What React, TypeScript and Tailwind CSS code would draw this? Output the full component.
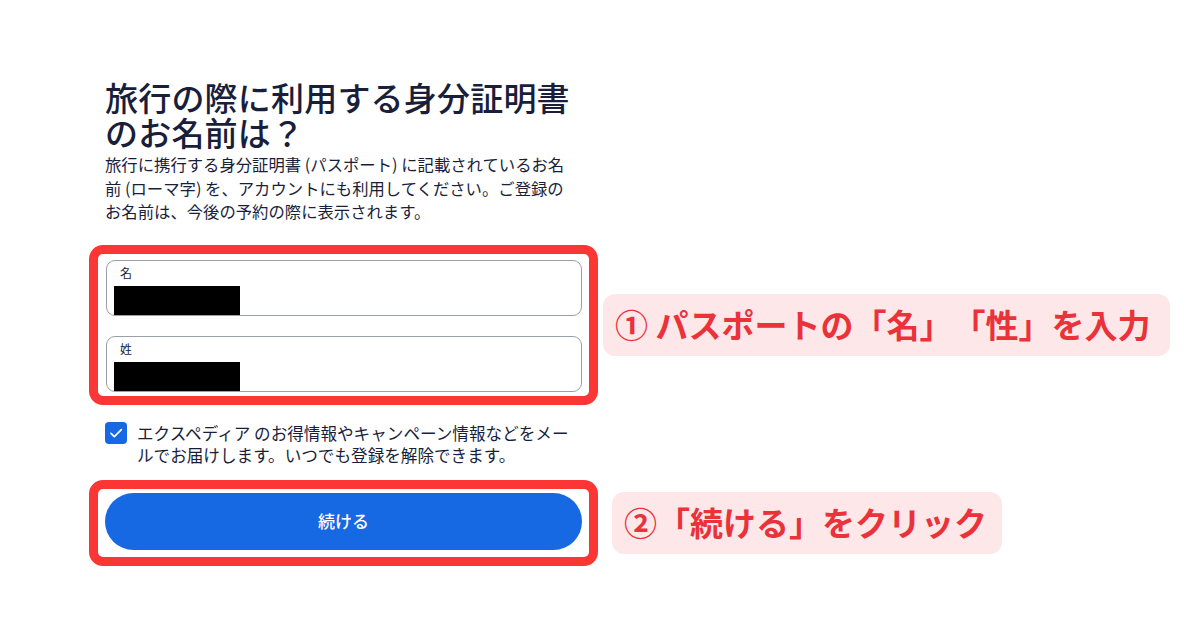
import React from 'react'

const font = "font-['Noto_Sans_CJK_JP','Noto_Sans',sans-serif]"

function NameField({ label }: { label: string }) {
  return (
    <div className="flex flex-col h-[56px] border border-[#9aa0a8] rounded-[9px] pl-[7px] pt-[5px]">
      <span className="ml-[6px] text-[12px] leading-[14px] text-[#191e3b]">{label}</span>
      {/* masked value */}
      <div className="mt-[6px] w-[126px] h-[29px] bg-black" />
    </div>
  )
}

function Note({ children, className }: { children: React.ReactNode; className?: string }) {
  return (
    <div className={`bg-[#fde7e8] rounded-[12px] pl-[12px] flex items-center font-bold text-[#e9323a] [text-spacing-trim:space-all] ${className ?? ''}`}>
      {children}
    </div>
  )
}

export default function App() {
  return (
    <div className={`w-[1200px] h-[630px] bg-white overflow-hidden pt-[80px] pl-[89px] ${font}`}>
      {/* Heading */}
      <div className="pl-[16px] text-[#191e3b]">
        <h1 className="text-[33px] leading-[35px] font-medium tracking-[0.2px]">
          旅行の際に利用する身分証明書
          <br />
          のお名前は？
        </h1>
        <p className="mt-[3px] text-[16.35px] leading-[23.5px]">
          旅行に携行する身分証明書 (パスポート) に記載されているお名
          <br />
          前 (ローマ字) を、アカウントにも利用してください。ご登録の
          <br />
          お名前は、今後の予約の際に表示されます。
        </p>
      </div>

      {/* Step 1: name fields */}
      <div className="mt-[21px] flex items-center">
        <div className="w-[509px] h-[160px] border-[9px] border-[#fc3535] rounded-[14px] pt-[6px] pl-[8px] pr-[7px] flex flex-col gap-[20px]">
          <NameField label="名" />
          <NameField label="姓" />
        </div>
        <Note className="ml-[5px] h-[62px] pr-[19px] text-[33px] leading-none">
          <span>①&nbsp;パスポートの「名」「性」を入力</span>
        </Note>
      </div>

      {/* Newsletter opt-in */}
      <div className="mt-[17px] pl-[16px] flex items-start gap-[10px]">
        <div className="w-[22px] h-[22px] rounded-[4px] bg-[#1668e3] flex items-center justify-center shrink-0">
          <svg width="16" height="16" viewBox="0 0 24 24" fill="none">
            <path d="M4.5 12.5l5 5L20 7" stroke="white" strokeWidth="2.6" strokeLinecap="round" strokeLinejoin="round" />
          </svg>
        </div>
        <p className="text-[16.6px] leading-[22px] text-[#191e3b]">
          エクスペディア のお得情報やキャンペーン情報などをメー
          <br />
          ルでお届けします。いつでも登録を解除できます。
        </p>
      </div>

      {/* Step 2: continue */}
      <div className="mt-[14px] flex items-center">
        <div className="w-[509px] h-[86px] border-[9px] border-[#fc3535] rounded-[14px] pt-[4px] px-[7px]">
          <button className="w-full h-[57px] rounded-full bg-[#1668e3] text-white text-[17px] font-medium">
            続ける
          </button>
        </div>
        <Note className="ml-[14px] h-[62px] pr-[15px] text-[33px] leading-none">
          <span>②「続ける」をクリック</span>
        </Note>
      </div>
    </div>
  )
}
